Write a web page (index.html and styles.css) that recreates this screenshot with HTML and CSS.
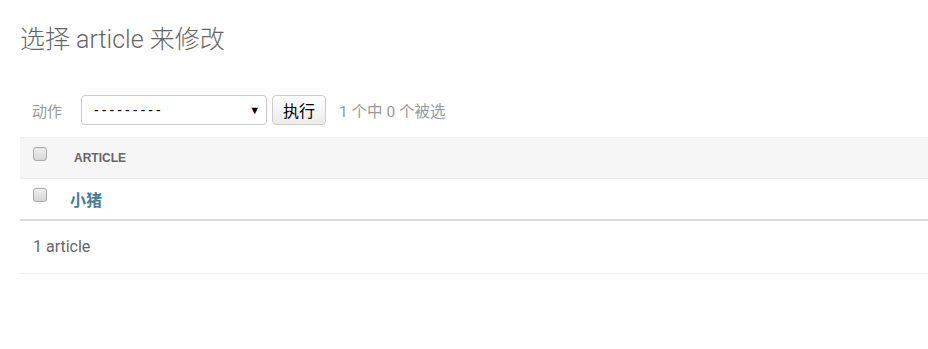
FILE: index.html
```html
<!DOCTYPE html>
<html lang="zh-hans">
<head>
<meta charset="utf-8">
<title>选择 article 来修改</title>
<link rel="stylesheet" href="styles.css">
</head>
<body>
<div class="content">
  <h1 class="title">选择 article 来修改</h1>
  <div class="actions">
    <span class="label">动作</span>
    <div class="select"><span class="select-text">---------</span><span class="arrow">▼</span></div>
    <button class="go" type="button">执行</button>
    <span class="counter">1 个中 0 个被选</span>
  </div>
  <table class="result">
    <thead>
      <tr>
        <th class="check-col"><span class="cb"></span></th>
        <th class="col-head">ARTICLE</th>
      </tr>
    </thead>
    <tbody>
      <tr>
        <td class="check-col"><span class="cb"></span></td>
        <th class="col-link"><a href="#">小猪</a></th>
      </tr>
    </tbody>
  </table>
  <p class="paginator">1 article</p>
</div>
</body>
</html>
```
FILE: styles.css
```css
html, body {
  margin: 0;
  padding: 0;
  background: #fff;
}
body {
  font-family: Roboto, "Liberation Sans", "Noto Sans CJK SC", sans-serif;
  color: #333;
  font-size: 14px;
}
.content {
  padding: 21px 0 0 20px;
}
.title {
  margin: 0;
  font-size: 25px;
  font-weight: 300;
  color: #666;
  line-height: 38px;
}
.actions {
  display: flex;
  align-items: center;
  margin-top: 36px;
  height: 30px;
  padding-left: 12px;
}
.label {
  font-size: 15px;
  color: #999;
  margin-right: 19px;
}
.select {
  box-sizing: border-box;
  width: 186px;
  height: 30px;
  border: 1px solid #ccc;
  border-radius: 4px;
  display: flex;
  align-items: center;
  justify-content: space-between;
  padding: 0 6px 0 12px;
  font-family: "Liberation Sans", sans-serif;
  font-size: 14px;
  color: #000;
}
.select-text {
  letter-spacing: 3.1px;
}
.arrow {
  font-size: 11px;
}
.go {
  box-sizing: border-box;
  margin-left: 5px;
  width: 54px;
  height: 30px;
  border: 1px solid #ccc;
  border-radius: 4px;
  background: linear-gradient(#fff, #ececec);
  font-family: "Noto Sans CJK SC", sans-serif;
  font-size: 16px;
  color: #000;
  padding: 0;
}
.counter {
  margin-left: 13px;
  font-size: 15.5px;
  color: #999;
}
.result {
  margin-top: 12px;
  width: 100%;
  border-collapse: collapse;
}
.result thead th {
  background: #f6f6f6;
  border-top: 1px solid #eee;
  border-bottom: 1px solid #eee;
  height: 40px;
  text-align: left;
  padding: 0;
}
.result tbody td,
.result tbody th {
  height: 40px;
  border-bottom: 2px solid #ddd;
  text-align: left;
  padding: 0;
}
.check-col {
  width: 37px;
  padding-left: 13px !important;
  vertical-align: top;
}
.result thead .check-col {
  vertical-align: middle;
}
.cb {
  display: block;
  box-sizing: border-box;
  width: 14px;
  height: 14px;
  border: 1px solid #a9a9a9;
  border-radius: 3px;
  background: linear-gradient(#f0f0f0, #d6d6d6);
  margin-top: -8px;
}
.result tbody .cb {
  margin-top: 9px;
}
.col-head {
  font-size: 12px;
  font-weight: 700;
  color: #666;
  padding-left: 4px !important;
  font-family: "Liberation Sans", Roboto, sans-serif;
}
.col-link {
  padding-left: 0 !important;
  vertical-align: middle;
}
.col-link a {
  color: #447e9b;
  text-decoration: none;
  font-weight: 700;
  font-size: 16px;
  font-family: "Noto Sans CJK SC", sans-serif;
}
.paginator {
  margin: 0;
  padding: 0 0 0 13px;
  height: 52px;
  line-height: 52px;
  font-size: 16px;
  color: #666;
  border-bottom: 1px solid #eee;
}
```
